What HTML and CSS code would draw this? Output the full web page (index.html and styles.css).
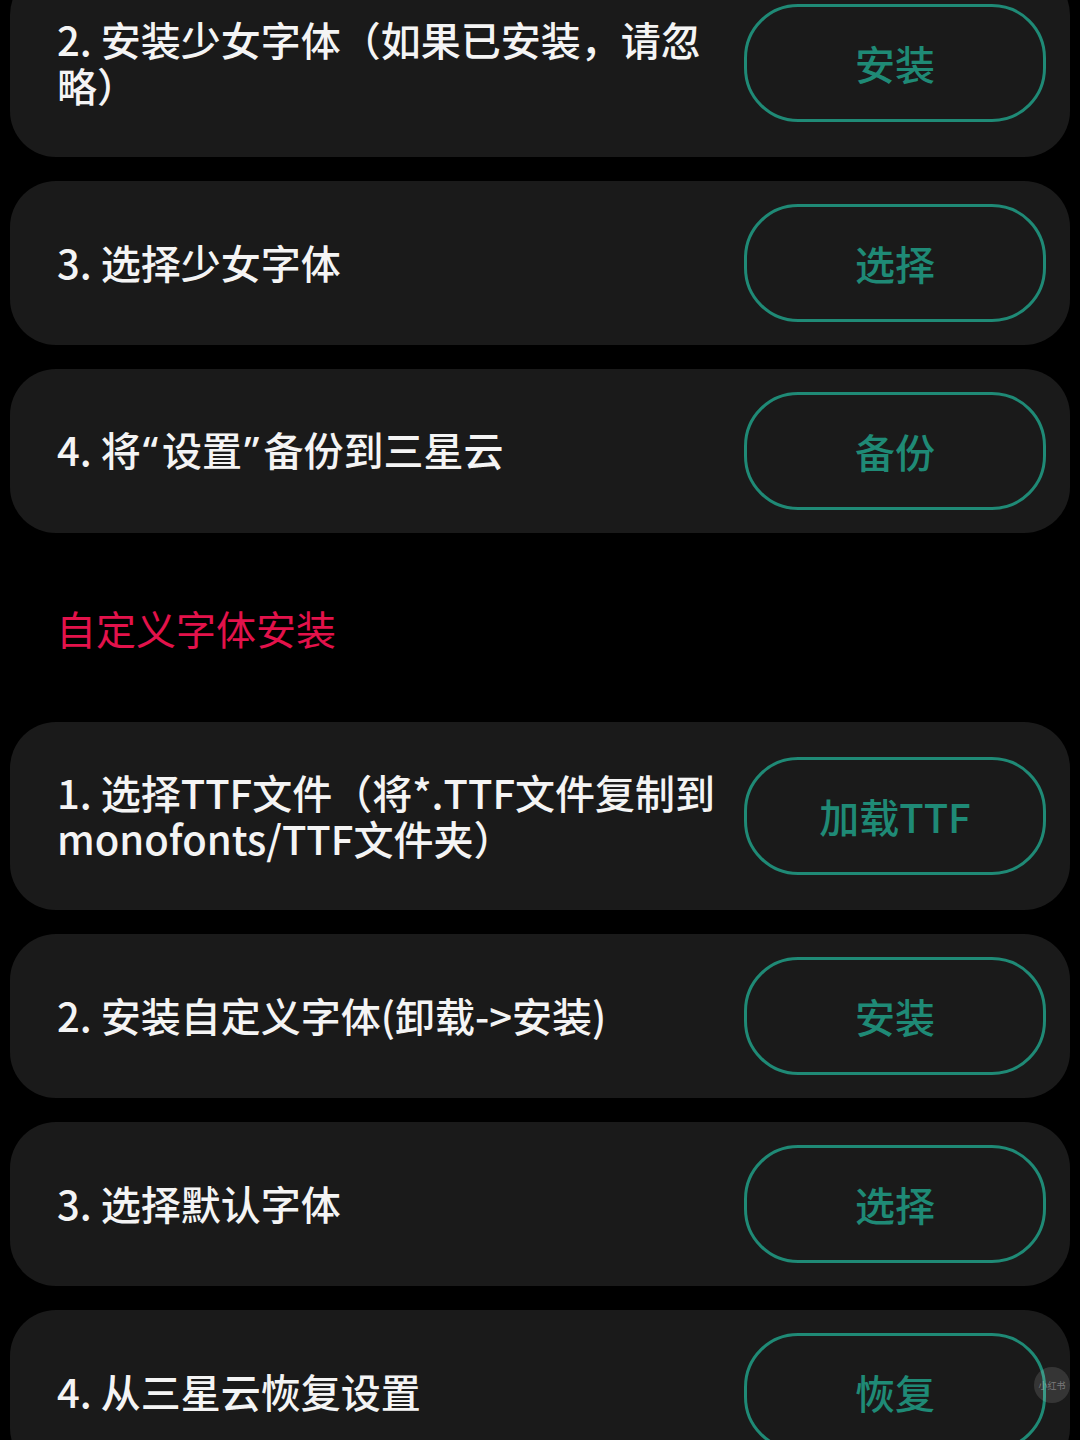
FILE: index.html
```html
<!DOCTYPE html>
<html lang="zh-CN">
<head>
<meta charset="utf-8">
<link rel="stylesheet" href="styles.css">
</head>
<body>
<div class="page">
  <div class="list list-top">
    <div class="card">
      <div class="label">2. 安装少女字体（如果已安装，请忽略）</div>
      <div class="btn">安装</div>
    </div>
    <div class="card">
      <div class="label">3. 选择少女字体</div>
      <div class="btn">选择</div>
    </div>
    <div class="card">
      <div class="label">4. 将<span class="q">“</span>设置<span class="q">”</span>备份到三星云</div>
      <div class="btn">备份</div>
    </div>
  </div>
  <div class="section">自定义字体安装</div>
  <div class="list">
    <div class="card">
      <div class="label">1. 选择TTF文件（将*.TTF文件复制到monofonts/TTF文件夹）</div>
      <div class="btn">加载TTF</div>
    </div>
    <div class="card">
      <div class="label">2. 安装自定义字体(卸载-&gt;安装)</div>
      <div class="btn">安装</div>
    </div>
    <div class="card">
      <div class="label">3. 选择默认字体</div>
      <div class="btn">选择</div>
    </div>
    <div class="card">
      <div class="label">4. 从三星云恢复设置</div>
      <div class="btn">恢复</div>
    </div>
  </div>
  <div class="mark">小红书</div>
</div>
</body>
</html>
```
FILE: styles.css
```css
html, body {
  margin: 0;
  padding: 0;
  background: #000;
}
body {
  width: 1080px;
  height: 1440px;
  overflow: hidden;
  font-family: "Noto Sans CJK SC", "Noto Sans", sans-serif;
}
.page {
  position: relative;
  height: 1440px;
  padding: 0 10px;
}
.list {
  display: flex;
  flex-direction: column;
  gap: 24px;
}
.list-top {
  margin-top: -31px;
}
.card {
  background: #1a1a1a;
  border-radius: 46px;
  display: flex;
  align-items: center;
  justify-content: space-between;
  padding: 23px 24px 23px 47px;
  min-height: 118px;
}
.label {
  color: #f4f4f4;
  font-size: 40px;
  font-weight: 500;
  line-height: 46px;
  width: 668px;
  padding: 24px 0 26px;
  letter-spacing: 0;
}
.q {
  font-family: "Noto Sans", sans-serif;
  padding: 0 4px 0 2px;
}
.btn {
  box-sizing: border-box;
  width: 302px;
  height: 118px;
  border: 3px solid #1f8a76;
  border-radius: 54px;
  color: #1f8a76;
  font-size: 40px;
  font-weight: 500;
  display: flex;
  align-items: center;
  justify-content: center;
  flex-shrink: 0;
}
.section {
  height: 189px;
  display: flex;
  align-items: center;
  padding-left: 46px;
  color: #e3124b;
  font-size: 40px;
  font-weight: 400;
}
.mark {
  position: absolute;
  right: 10px;
  bottom: 6px;
  width: 36px;
  height: 36px;
  border-radius: 50%;
  background: rgba(255,255,255,0.12);
  color: rgba(255,255,255,0.35);
  font-size: 9px;
  display: flex;
  align-items: center;
  justify-content: center;
}
```
